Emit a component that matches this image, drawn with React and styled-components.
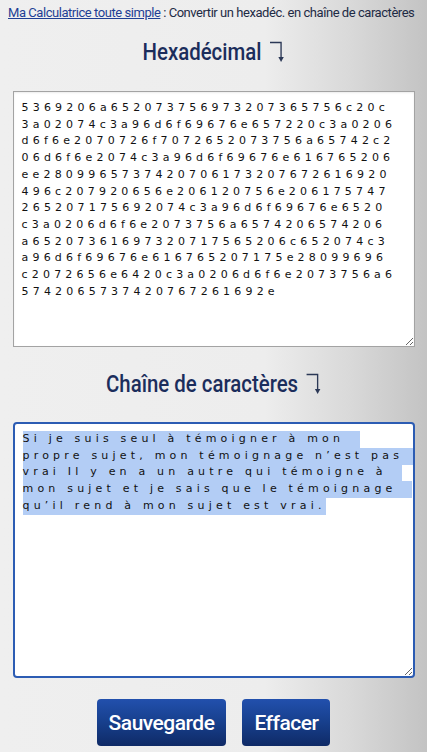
import React, { useEffect, useRef } from 'react';
import styled, { createGlobalStyle } from 'styled-components';

const GlobalStyle = createGlobalStyle`
  html, body {
    margin: 0;
    padding: 0;
  }
  body {
    background: linear-gradient(to right, #efefef 0%, #ededed 62%, #d9d9d9 82%, #c3c3c3 100%);
    min-height: 100vh;
    font-family: Roboto, "Liberation Sans", sans-serif;
  }
`;

const Page = styled.div`
  display: flex;
  flex-direction: column;
  align-items: center;
  padding: 4px 12px 0;
  min-height: 100vh;
  box-sizing: border-box;
`;

const Breadcrumb = styled.div`
  align-self: stretch;
  font-size: 13px;
  line-height: 18px;
  letter-spacing: -0.45px;
  color: #1e2b45;
  white-space: nowrap;
  margin-left: -4px;
`;

const CrumbLink = styled.a`
  color: #1f3f95;
  text-decoration: underline;
`;

const Title = styled.h2`
  display: flex;
  align-items: center;
  gap: 9px;
  margin: ${(p) => p.$top}px 0 ${(p) => p.$bottom}px;
  font-size: 24px;
  line-height: 30px;
  font-weight: 500;
  color: #1b2d5c;
  transform: scaleX(0.85);
`;

const Field = styled.textarea`
  box-sizing: border-box;
  width: 402px;
  height: 256px;
  margin: 0;
  padding: ${(p) => (p.$active ? '7px 6px 7px 8px' : '8px 17px 7px 8px')};
  font-family: "DejaVu Sans", Verdana, sans-serif;
  font-size: 11px;
  line-height: 16.7px;
  letter-spacing: 4.2px;
  color: #111;
  background: #fff;
  border: ${(p) => (p.$active ? '2px solid #2c5cb3' : '1px solid #a3a3a3')};
  border-radius: ${(p) => (p.$active ? '4px' : '0')};
  box-shadow: ${(p) => (p.$active ? 'none' : 'inset 0 1px 2px rgba(0,0,0,0.08)')};
  outline: none;
  resize: both;

  &::selection {
    background: #b3cdf5;
    color: #111;
  }
`;

const Buttons = styled.div`
  display: flex;
  gap: 16px;
  margin-top: 21px;
`;

const Button = styled.button`
  height: 47px;
  padding: 0 12px;
  border: none;
  border-radius: 4px;
  background: linear-gradient(to bottom, #2250ad 0%, #173f8c 50%, #0f2a66 100%);
  color: #fff;
  font-family: Roboto, "Liberation Sans", sans-serif;
  font-size: 21px;
  font-weight: 500;
  letter-spacing: -0.5px;
  cursor: pointer;
`;

const CornerArrow = () => (
  <svg width="18" height="22" viewBox="0 0 18 22" aria-hidden="true">
    <path d="M1 1.5 H14 V18" fill="none" stroke="#2b3856" strokeWidth="1.6" />
    <path d="M10.8 16 L14 21 L17.2 16 Z" fill="#2b3856" />
  </svg>
);

const text =
  'Si je suis seul à témoigner à mon propre sujet, mon témoignage n’est pas vrai Il y en a un autre qui témoigne à mon sujet et je sais que le témoignage qu’il rend à mon sujet est vrai.';

const toHex = (s) =>
  Array.from(new TextEncoder().encode(s))
    .map((b) => b.toString(16).padStart(2, '0'))
    .join('');

const App = () => {
  const outRef = useRef(null);

  useEffect(() => {
    const el = outRef.current;
    if (el) {
      el.focus();
      el.setSelectionRange(0, el.value.length);
    }
  }, []);

  return (
    <>
      <GlobalStyle />
      <Page>
        <Breadcrumb>
          <CrumbLink href="#">Ma Calculatrice toute simple</CrumbLink> : Convertir un hexadéc. en chaîne de caractères
        </Breadcrumb>

        <Title $top={15} $bottom={24}>
          Hexadécimal <CornerArrow />
        </Title>
        <Field defaultValue={toHex(text)} spellCheck={false} />

        <Title $top={22} $bottom={23}>
          Chaîne de caractères <CornerArrow />
        </Title>
        <Field ref={outRef} $active defaultValue={text} spellCheck={false} />

        <Buttons>
          <Button>Sauvegarde</Button>
          <Button>Effacer</Button>
        </Buttons>
      </Page>
    </>
  );
};

export default App;
